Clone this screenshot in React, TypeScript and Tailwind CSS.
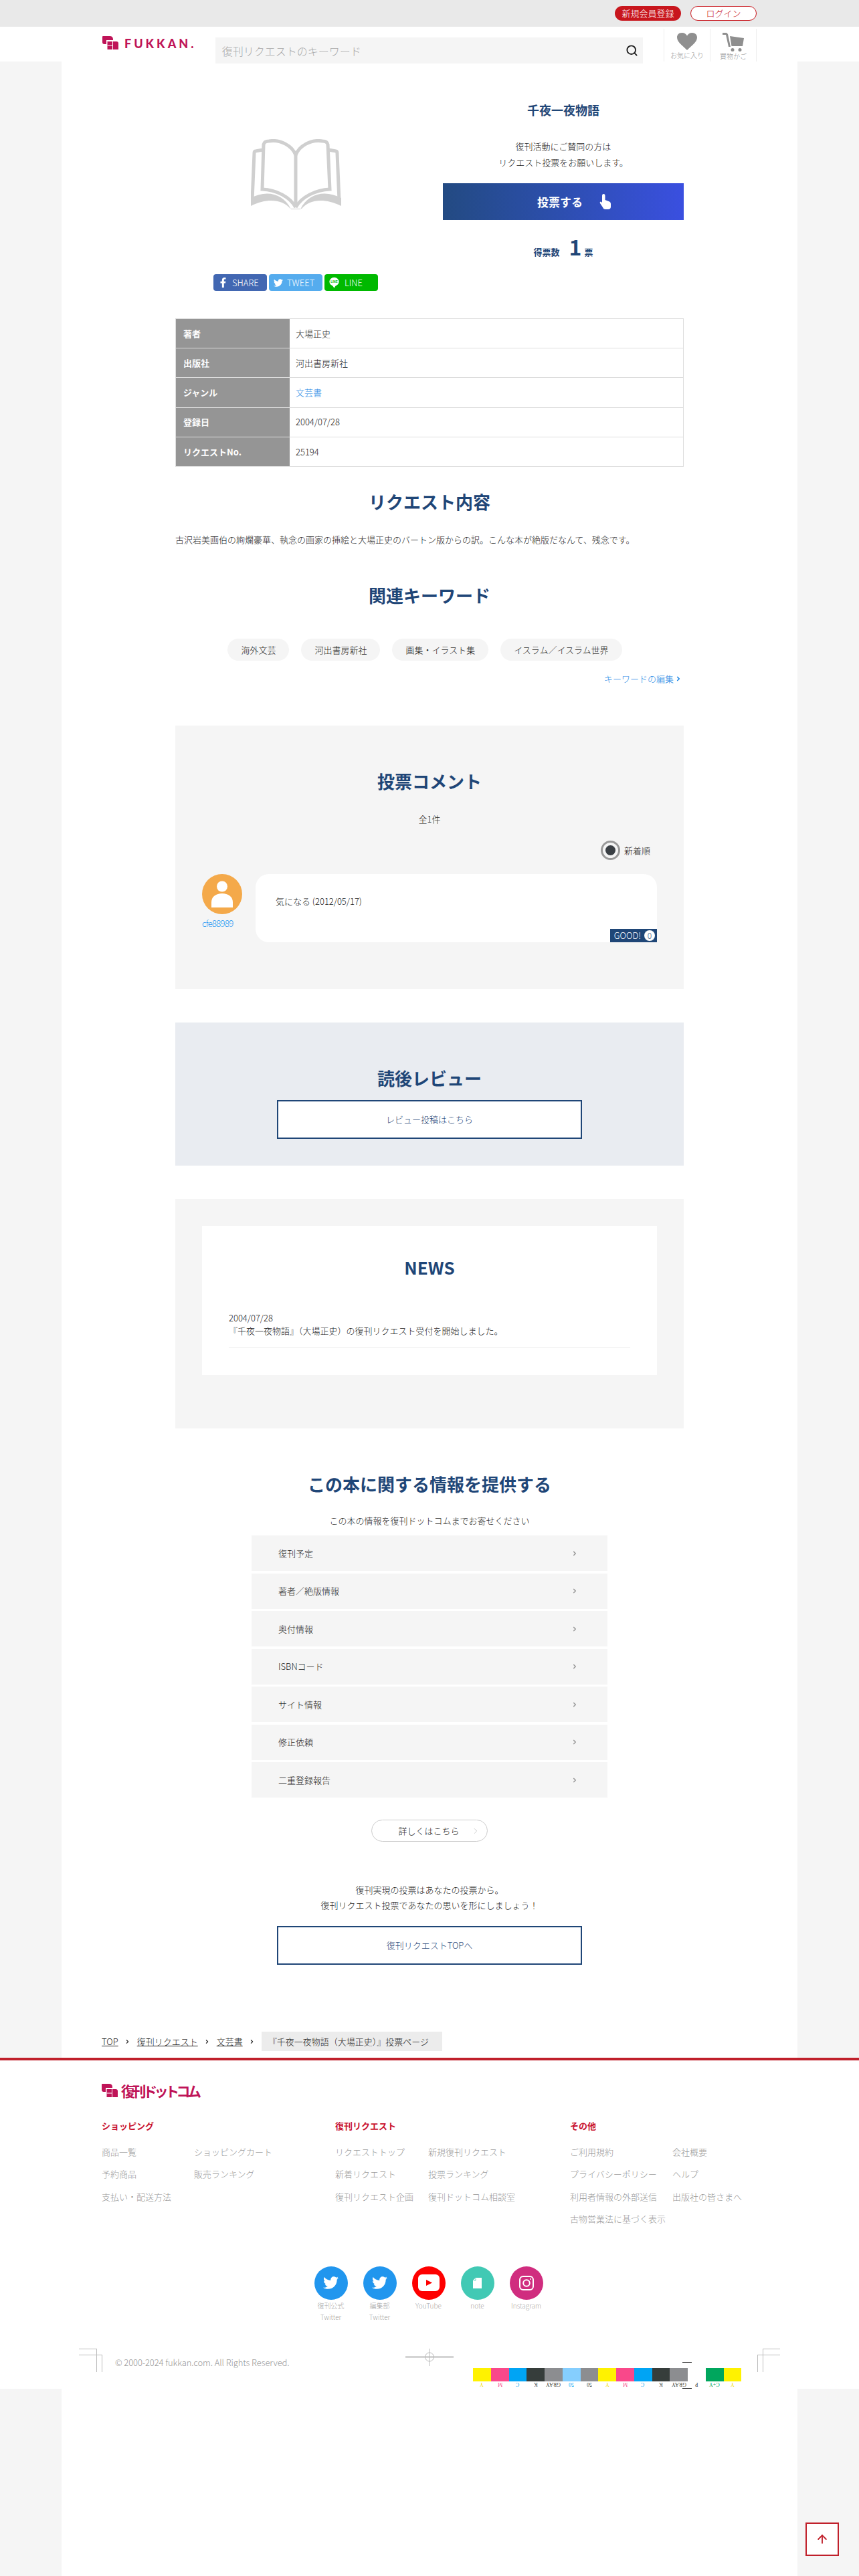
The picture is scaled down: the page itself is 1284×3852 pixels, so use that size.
import { ChevronRight, Search, ArrowUp } from "lucide-react";
import { FaFacebookF, FaTwitter } from "react-icons/fa";

const NAVY = "text-[#1f4677]";

function LogoMark({ className }: { className: string }) {
  return (
    <svg viewBox="0 0 24 20" className={className} fill="#bf1458">
      <path d="M0 1 Q0 0 1 0 H11 Q16 0 16 5 V6 H6 V12 H3 Q0 12 0 9 Z" />
      <path d="M7.5 8 H21 Q24 8 24 11 V20 H7.5 Z" />
      <path d="M15.5 8 V20 M7.5 14 H15.5" stroke="#fff" strokeWidth="1" />
    </svg>
  );
}

function Heading({ children, className = "" }: { children: React.ReactNode; className?: string }) {
  return <h2 className={`text-[26px] leading-[36px] pb-[2px] font-bold text-center ${NAVY} ${className}`}>{children}</h2>;
}

function BookIcon() {
  return (
    <svg viewBox="0 0 135 105" className="w-[135px] h-[105px]" fill="none" stroke="#cfcfcf" strokeWidth="5">
      <path d="M67 24 C62 10 44 0 27 3 Q20 3 19 8 L17 75 C38 76 58 86 67 102" />
      <path d="M67 24 C72 10 90 0 107 3 Q114 3 115 8 L118 75 C97 76 76 86 67 102" />
      <path d="M67 24 V102" />
      <path d="M18 16 L7 18 Q5 18 5 21 L2 92" />
      <path d="M116 16 L127 18 Q129 18 129 21 L132 92" />
      <path
        stroke="none"
        fill="#cfcfcf"
        d="M0 88 C22 76 48 80 60 105 H74 C86 80 112 76 135 88 V100 C110 88 88 90 76 104 H59 C47 90 24 88 0 100 Z"
      />
    </svg>
  );
}

function LineBubble() {
  return (
    <svg viewBox="0 0 18 20" className="w-[15px] h-[17px]">
      <ellipse cx="9" cy="8.5" rx="8.5" ry="7.8" fill="#fff" />
      <path d="M5 14 L9 20 L12 15 Z" fill="#fff" />
      <text x="9" y="10.5" textAnchor="middle" fontSize="5.5" fontWeight="700" fill="#00b900" fontFamily="Liberation Sans">
        LINE
      </text>
    </svg>
  );
}

function HandIcon() {
  return (
    <svg viewBox="0 0 18 23" className="w-[18px] h-[23px]" fill="#fff">
      <path d="M4 3 Q4 0 6.2 0 Q8.5 0 8.5 3 V9 L14 11 Q17 12 17 15 V19 Q17 23 13 23 H9 Q6 23 5 20 L1 14 Q0 11.5 2.2 11.5 L4 13 Z" />
    </svg>
  );
}

const infoRows = ["復刊予定", "著者／絶版情報", "奥付情報", "ISBNコード", "サイト情報", "修正依頼", "二重登録報告"];

const bar = [
  ["bg-[#fff200]", "Y", "text-[#f5e000]"],
  ["bg-[#f9488a]", "M", "text-[#f9488a]"],
  ["bg-[#00a4f4]", "C", "text-[#00a4f4]"],
  ["bg-[#363d3b]", "K", "text-[#363d3b]"],
  ["bg-[#8c8d90]", "GRAY", "text-[#363d3b]"],
  ["bg-[#85cefe]", "50", "text-[#00a4f4]"],
  ["bg-[#8c8d90]", "50", "text-[#363d3b]"],
  ["bg-[#fff200]", "Y", "text-[#f5e000]"],
  ["bg-[#f9488a]", "M", "text-[#f9488a]"],
  ["bg-[#00a4f4]", "C", "text-[#00a4f4]"],
  ["bg-[#363d3b]", "K", "text-[#363d3b]"],
  ["bg-[#8c8d90]", "GRAY", "text-[#363d3b]"],
  ["bg-white", "P", "text-[#363d3b]"],
  ["bg-[#00a65d]", "C+Y", "text-[#00a65d]"],
  ["bg-[#fff200]", "Y", "text-[#f5e000]"],
];

const footerCols = [
  {
    title: "ショッピング",
    colW: "w-[349px]",
    grid: "grid-cols-[138px_1fr]",
    links: ["商品一覧", "ショッピングカート", "予約商品", "販売ランキング", "支払い・配送方法"],
  },
  {
    title: "復刊リクエスト",
    colW: "w-[351px]",
    grid: "grid-cols-[139px_1fr]",
    links: ["リクエストトップ", "新規復刊リクエスト", "新着リクエスト", "投票ランキング", "復刊リクエスト企画", "復刊ドットコム相談室"],
  },
  {
    title: "その他",
    colW: "w-[300px]",
    grid: "grid-cols-[153px_1fr]",
    links: ["ご利用規約", "会社概要", "プライバシーポリシー", "ヘルプ", "利用者情報の外部送信", "出版社の皆さまへ", "古物営業法に基づく表示"],
  },
];

function SocialItem({ bg, lines, children }: { bg: string; lines: string[]; children: React.ReactNode }) {
  return (
    <div className="w-[50px] flex flex-col items-center">
      <div className={`w-[50px] h-[50px] rounded-full flex items-center justify-center ${bg}`}>{children}</div>
      {lines.map((l) => (
        <span key={l} className="text-[10px] leading-[17.5px] text-[#aaa] whitespace-nowrap">
          {l}
        </span>
      ))}
    </div>
  );
}

export default function App() {
  return (
    <div className="relative min-h-[3852px] flex flex-col bg-[#f5f5f5] text-[13px] text-[#222] font-light font-['Noto_Sans_CJK_JP','Noto_Sans',sans-serif]">
      {/* top bar */}
      <div className="h-10 bg-[#e9e9e9] flex justify-end items-start pt-[9px] pr-[153px] gap-[14px]">
        <a className="w-[99px] h-[22px] rounded-full bg-[#c8161d] text-white text-[13px] flex items-center justify-center">新規会員登録</a>
        <a className="w-[99px] h-[22px] rounded-full bg-white border border-[#c8161d] text-[#c8161d] text-[13px] flex items-center justify-center">ログイン</a>
      </div>
      {/* header */}
      <header className="h-[52px] bg-white relative z-10 flex items-start pl-[153px] pr-[153px]">
        <div className="w-[169px] pt-[14px] flex items-start">
          <LogoMark className="w-[24px] h-[20px]" />
          <span className="ml-[9px] mt-[1px] text-[#bf1458] font-['Lato',sans-serif] font-black text-[18px] leading-[20px] tracking-[4px]">FUKKAN.</span>
        </div>
        <div className="mt-[16px] w-[640px] h-[39px] bg-[#f5f5f5] flex items-center justify-between pl-[10px] pr-[7px]">
          <span className="text-base text-[#aaa]">復刊リクエストのキーワード</span>
          <Search className="w-[19px] h-[19px] text-[#222]" strokeWidth={2.4} />
        </div>
        <div className="ml-[31px] mt-[3px] flex h-[49px] border-r border-[#eee]">
          <div className="w-[69px] border-l border-[#eee] flex flex-col items-center">
            <svg viewBox="0 0 30 26" className="w-[30px] h-[26px] mt-[6px]" fill="#8f8f8f">
              <path d="M15 26 C8 19 0 14 0 7 C0 3 3 0 7.5 0 C11 0 13.5 2 15 4.5 C16.5 2 19 0 22.5 0 C27 0 30 3 30 7 C30 14 22 19 15 26 Z" />
            </svg>
            <span className="text-[10px] leading-[14px] mt-[1px] text-[#999] whitespace-nowrap">お気に入り</span>
          </div>
          <div className="w-[69px] border-l border-[#eee] flex flex-col items-center">
            <svg viewBox="0 0 32 28" className="w-[32px] h-[28px] mt-[6px]" fill="#8f8f8f">
              <path d="M0 0 H6 L8 2 L12 21 H9 L5 3 H0 Z" />
              <path d="M11 5 L32 8 L30 20 L13.5 20 Z" />
              <circle cx="15" cy="25.5" r="2.5" />
              <circle cx="26" cy="25.5" r="2.5" />
            </svg>
            <span className="text-[10px] leading-[14px] text-[#999] whitespace-nowrap">買物かご</span>
          </div>
        </div>
      </header>

      {/* main column */}
      <main className="w-[1100px] mx-auto bg-white">
        <div className="w-[760px] mx-auto">
          {/* hero */}
          <div className="flex gap-10">
            <div className="w-[360px] flex flex-col items-center pt-[116px]">
              <BookIcon />
              <div className="mt-[97px] flex gap-[3px]">
                <a className="w-[80px] h-[25px] rounded bg-[#4267b2] text-white text-[13px] flex items-center pl-[8px] gap-[7px]">
                  <FaFacebookF className="w-[13px] h-[15px]" />
                  SHARE
                </a>
                <a className="w-[80px] h-[25px] rounded bg-[#55acee] text-white text-[13px] flex items-center pl-[7px] gap-[6px]">
                  <FaTwitter className="w-[14px] h-[14px]" />
                  TWEET
                </a>
                <a className="w-[80px] h-[25px] rounded bg-[#00b900] text-white text-[13px] flex items-center pl-[7px] gap-[8px]">
                  <LineBubble />
                  LINE
                </a>
              </div>
            </div>
            <div className="w-[360px] pt-[59px] flex flex-col items-center">
              <h1 className={`text-lg leading-[26px] font-bold ${NAVY}`}>千夜一夜物語</h1>
              <p className="mt-[30px] leading-[24px] text-center">
                復刊活動にご賛同の方は
                <br />
                リクエスト投票をお願いします。
              </p>
              <a className="mt-[19px] w-[360px] h-[55px] bg-gradient-to-r from-[#234a82] to-[#3a4fe0] text-white text-[17px] font-bold flex items-center pl-[141px] gap-[25px]">
                投票する
                <HandIcon />
              </a>
              <div className={`mt-[19px] flex items-baseline font-bold leading-[40px] ${NAVY}`}>
                <span>得票数</span>
                <span className="ml-[14px] mr-[4px] text-[32px]">1</span>
                <span>票</span>
              </div>
            </div>
          </div>

          {/* table */}
          <dl className="mt-[41px] h-[222px] border border-[#ddd] flex flex-col">
            {[
              ["著者", "大場正史"],
              ["出版社", "河出書房新社"],
              ["ジャンル", "文芸書"],
              ["登録日", "2004/07/28"],
              ["リクエストNo.", "25194"],
            ].map(([k, v], i) => (
              <div key={k} className={`flex-1 flex ${i > 0 ? "border-t border-[#ddd]" : ""}`}>
                <dt className="w-[170px] bg-[#959595] text-white font-bold flex items-center pl-[11px]">{k}</dt>
                <dd className={`pl-[9px] flex items-center ${k === "ジャンル" ? "text-[#1e88e5]" : ""}`}>{v}</dd>
              </div>
            ))}
          </dl>

          <Heading className="mt-[34px]">リクエスト内容</Heading>
          <p className="mt-[27px] leading-[20px]">
            古沢岩美画伯の絢爛豪華、執念の画家の挿絵と大場正史のバートン版からの訳。こんな本が絶版だなんて、残念です。
          </p>

          <Heading className="mt-[55px]">関連キーワード</Heading>
          <div className="mt-[45px] flex justify-center gap-[18px] pr-[14px]">
            {["海外文芸", "河出書房新社", "画集・イラスト集", "イスラム／イスラム世界"].map((t) => (
              <a key={t} className="h-[33px] px-5 rounded-full bg-[#f5f5f5] flex items-center">
                {t}
              </a>
            ))}
          </div>
          <a className="mt-[17px] flex items-center justify-end leading-[20px] text-[#1e88e5] pr-[3px]">
            キーワードの編集
            <ChevronRight className="w-[10px] h-[12px] ml-[2px]" strokeWidth={4} />
          </a>

          {/* comments */}
          <section className="mt-[60px] h-[394px] bg-[#f5f5f5] pt-[65px]">
            <Heading>投票コメント</Heading>
            <p className="mt-[27px] leading-[20px] text-center">全1件</p>
            <div className="mt-[22px] h-[29px] flex justify-end items-center gap-[6px] pr-[50px]">
              <span className="w-[29px] h-[29px] rounded-full border-[3px] border-[#999] flex items-center justify-center">
                <span className="w-[15px] h-[15px] rounded-full bg-[#3a3f44]" />
              </span>
              新着順
            </div>
            <div className="mt-[21px] px-10 flex">
              <div className="w-[80px]">
                <div className="w-[60px] h-[60px] rounded-full bg-[#f4a94a] flex items-center justify-center">
                  <svg viewBox="0 0 32 40" className="w-[32px] h-[40px]" fill="#fff">
                    <circle cx="16" cy="8.5" r="8" />
                    <path d="M0 40 V32 C0 24 7 19 16 19 C25 19 32 24 32 32 V40 Z" />
                  </svg>
                </div>
                <a className="block mt-[4px] leading-[20px] text-[#2196f3] tracking-[-0.7px]">cfe88989</a>
              </div>
              <div className="relative w-[600px] h-[102px] bg-white rounded-[20px] pt-[31px] pl-[30px] leading-[20px]">
                気になる (2012/05/17)
                <div className="absolute right-0 bottom-0 w-[70px] h-[20px] bg-[#1f4677] text-white flex items-center justify-end gap-[5px] pr-[3px]">
                  GOOD!
                  <span className="w-[16px] h-[16px] rounded-full bg-white text-[#1f4677] text-xs flex items-center justify-center">0</span>
                </div>
              </div>
            </div>
          </section>

          {/* reviews */}
          <section className="mt-[50px] h-[214px] bg-[#e9ecf1] pt-[65px] flex flex-col items-center">
            <Heading>読後レビュー</Heading>
            <a className={`mt-[13px] w-[456px] h-[58px] bg-white border-2 border-[#1f4677] flex items-center justify-center ${NAVY}`}>レビュー投稿はこちら</a>
          </section>

          {/* news */}
          <section className="mt-[50px] bg-[#f5f5f5] px-10 pt-10 pb-20">
            <div className="bg-white h-[223px] px-10 pt-[44px]">
              <Heading>NEWS</Heading>
              <div className="mt-[46px] pb-[15px] border-b-2 border-[#f5f5f5] leading-[19px]">
                <p>2004/07/28</p>
                <p>『千夜一夜物語』（大場正史）の復刊リクエスト受付を開始しました。</p>
              </div>
            </div>
          </section>

          {/* info */}
          <Heading className="mt-[65px]">この本に関する情報を提供する</Heading>
          <p className="mt-[25px] leading-[20px] text-center">この本の情報を復刊ドットコムまでお寄せください</p>
          <div className="mt-[12px] w-[532px] mx-auto flex flex-col gap-[3.5px]">
            {infoRows.map((r) => (
              <a key={r} className="h-[53px] bg-[#f5f5f5] flex items-center justify-between pl-[40px] pr-[44px]">
                {r}
                <ChevronRight className="w-[10px] h-[12px] text-[#999]" strokeWidth={4} />
              </a>
            ))}
          </div>
          <a className="relative mt-[33px] mx-auto w-[174px] h-[33px] rounded-full border border-[#ccc] flex items-center justify-center pr-[2px]">
            詳しくはこちら
            <ChevronRight className="absolute right-[10px] top-[8px] w-[14px] h-[16px] text-[#aaa]" strokeWidth={1} />
          </a>
          <p className="mt-[60px] leading-[23px] text-center">
            復刊実現の投票はあなたの投票から。
            <br />
            復刊リクエスト投票であなたの思いを形にしましょう！
          </p>
          <a className={`mt-[20px] mx-auto w-[456px] h-[58px] bg-white border-2 border-[#1f4677] flex items-center justify-center ${NAVY}`}>復刊リクエストTOPへ</a>
        </div>

        {/* breadcrumb */}
        <nav className="mt-[100px] mb-[10px] pl-[60px] h-[29px] flex items-center">
          <a className="underline">TOP</a>
          <ChevronRight className="w-[9px] h-[12px] mx-[9.5px]" strokeWidth={3} />
          <a className="underline">復刊リクエスト</a>
          <ChevronRight className="w-[9px] h-[12px] mx-[9.5px]" strokeWidth={3} />
          <a className="underline">文芸書</a>
          <ChevronRight className="w-[9px] h-[12px] mx-[9.5px]" strokeWidth={3} />
          <span className="h-[29px] w-[270px] bg-[#ececec] flex items-center pl-[10px] whitespace-nowrap">『千夜一夜物語（大場正史）』投票ページ</span>
        </nav>
      </main>

      {/* footer */}
      <footer className="bg-white border-t-4 border-[#c0202b] pt-[34px]">
        <div className="pl-[152px] flex items-center h-[22px]">
          <LogoMark className="w-[24px] h-[20px]" />
          <span className="ml-[5px] font-bold text-[#bf1458] text-[21px] leading-[22px] tracking-[-4.5px]">復刊ドットコム</span>
        </div>
        <div className="pl-[152px] mt-[32px] flex">
          {footerCols.map((c) => (
            <div key={c.title} className={c.colW}>
              <h3 className="font-bold leading-[20px] text-[#c8102e]">{c.title}</h3>
              <div className={`mt-[19px] grid ${c.grid} gap-y-[13.3px] text-[#999] leading-[20px]`}>
                {c.links.map((l) => (
                  <a key={l} className="whitespace-nowrap">
                    {l}
                  </a>
                ))}
              </div>
            </div>
          ))}
        </div>
        <div className="mt-[61px] flex justify-center gap-[23px] pr-[3px]">
          <SocialItem bg="bg-[#2196ee]" lines={["復刊公式", "Twitter"]}>
            <FaTwitter className="w-[23px] h-[23px] text-white" />
          </SocialItem>
          <SocialItem bg="bg-[#2196ee]" lines={["編集部", "Twitter"]}>
            <FaTwitter className="w-[23px] h-[23px] text-white" />
          </SocialItem>
          <SocialItem bg="bg-[#fe0000]" lines={["YouTube"]}>
            <svg viewBox="0 0 32 25" className="w-[32px] h-[25px]">
              <rect width="32" height="25" rx="6" fill="#fff" />
              <path d="M12 8 L21 12.5 L12 17 Z" fill="#fe0000" />
            </svg>
          </SocialItem>
          <SocialItem bg="bg-[#41c9b4]" lines={["note"]}>
            <svg viewBox="0 0 13 16" className="w-[13px] h-[16px]">
              <path d="M4 0 H13 V16 H0 V4 Z" fill="#fff" />
              <path d="M4 1 V4 H1" fill="none" stroke="#41c9b4" strokeWidth="0.8" />
            </svg>
          </SocialItem>
          <SocialItem bg="bg-[#d02d7f]" lines={["Instagram"]}>
            <svg viewBox="0 0 22 22" className="w-[22px] h-[22px]" fill="none" stroke="#fff" strokeWidth="2">
              <rect x="1" y="1" width="20" height="20" rx="5" />
              <circle cx="11" cy="11" r="4.8" />
              <circle cx="17" cy="5" r="1" fill="#fff" stroke="none" />
            </svg>
          </SocialItem>
        </div>
        <div className="relative h-[98px]">
          <p className="absolute left-[172px] top-[49px] leading-[20px] text-[#999] whitespace-nowrap tracking-[-0.1px]">© 2000-2024 fukkan.com. All Rights Reserved.</p>
          {/* printer's marks */}
          <span className="absolute left-[118px] top-[38px] w-[26px] h-px bg-[#bbb]" />
          <span className="absolute left-[118px] top-[47px] w-[34px] h-px bg-[#bbb]" />
          <span className="absolute left-[144px] top-[38px] w-px h-[35px] bg-[#bbb]" />
          <span className="absolute left-[152px] top-[47px] w-px h-[26px] bg-[#bbb]" />
          <span className="absolute left-[1140px] top-[38px] w-[26px] h-px bg-[#bbb]" />
          <span className="absolute left-[1132px] top-[47px] w-[34px] h-px bg-[#bbb]" />
          <span className="absolute left-[1140px] top-[38px] w-px h-[35px] bg-[#bbb]" />
          <span className="absolute left-[1132px] top-[47px] w-px h-[26px] bg-[#bbb]" />
          <svg viewBox="0 0 72 26" className="absolute left-[606px] top-[38px] w-[72px] h-[26px]" fill="none" stroke="#bbb">
            <path d="M0 12.5 H72" strokeWidth="2" />
            <path d="M36 0 V26" />
            <circle cx="36" cy="12.5" r="6.5" />
          </svg>
          <div className="absolute left-[707px] top-[67px] flex">
            {bar.map(([bg, label, color], i) => (
              <div key={i} className="w-[26.75px] flex flex-col items-center">
                <span className={`w-full h-[20px] ${bg}`} />
                <span className={`rotate-180 text-[8px] leading-[8px] font-['Liberation_Serif',serif] font-normal ${color}`}>{label}</span>
              </div>
            ))}
          </div>
          <span className="absolute left-[1020px] top-[58px] w-[14px] h-px bg-[#333]" />
          <span className="absolute left-[1020px] top-[97px] w-[14px] h-px bg-[#333]" />
        </div>
      </footer>

      {/* filler column */}
      <div className="flex-1 w-[1100px] mx-auto bg-white" />

      <a className="absolute right-[30px] bottom-[30px] w-[50px] h-[50px] bg-white border-2 border-[#c0202b] flex items-center justify-center text-[#c0202b]">
        <ArrowUp className="w-[20px] h-[20px]" strokeWidth={2.2} />
      </a>
    </div>
  );
}
